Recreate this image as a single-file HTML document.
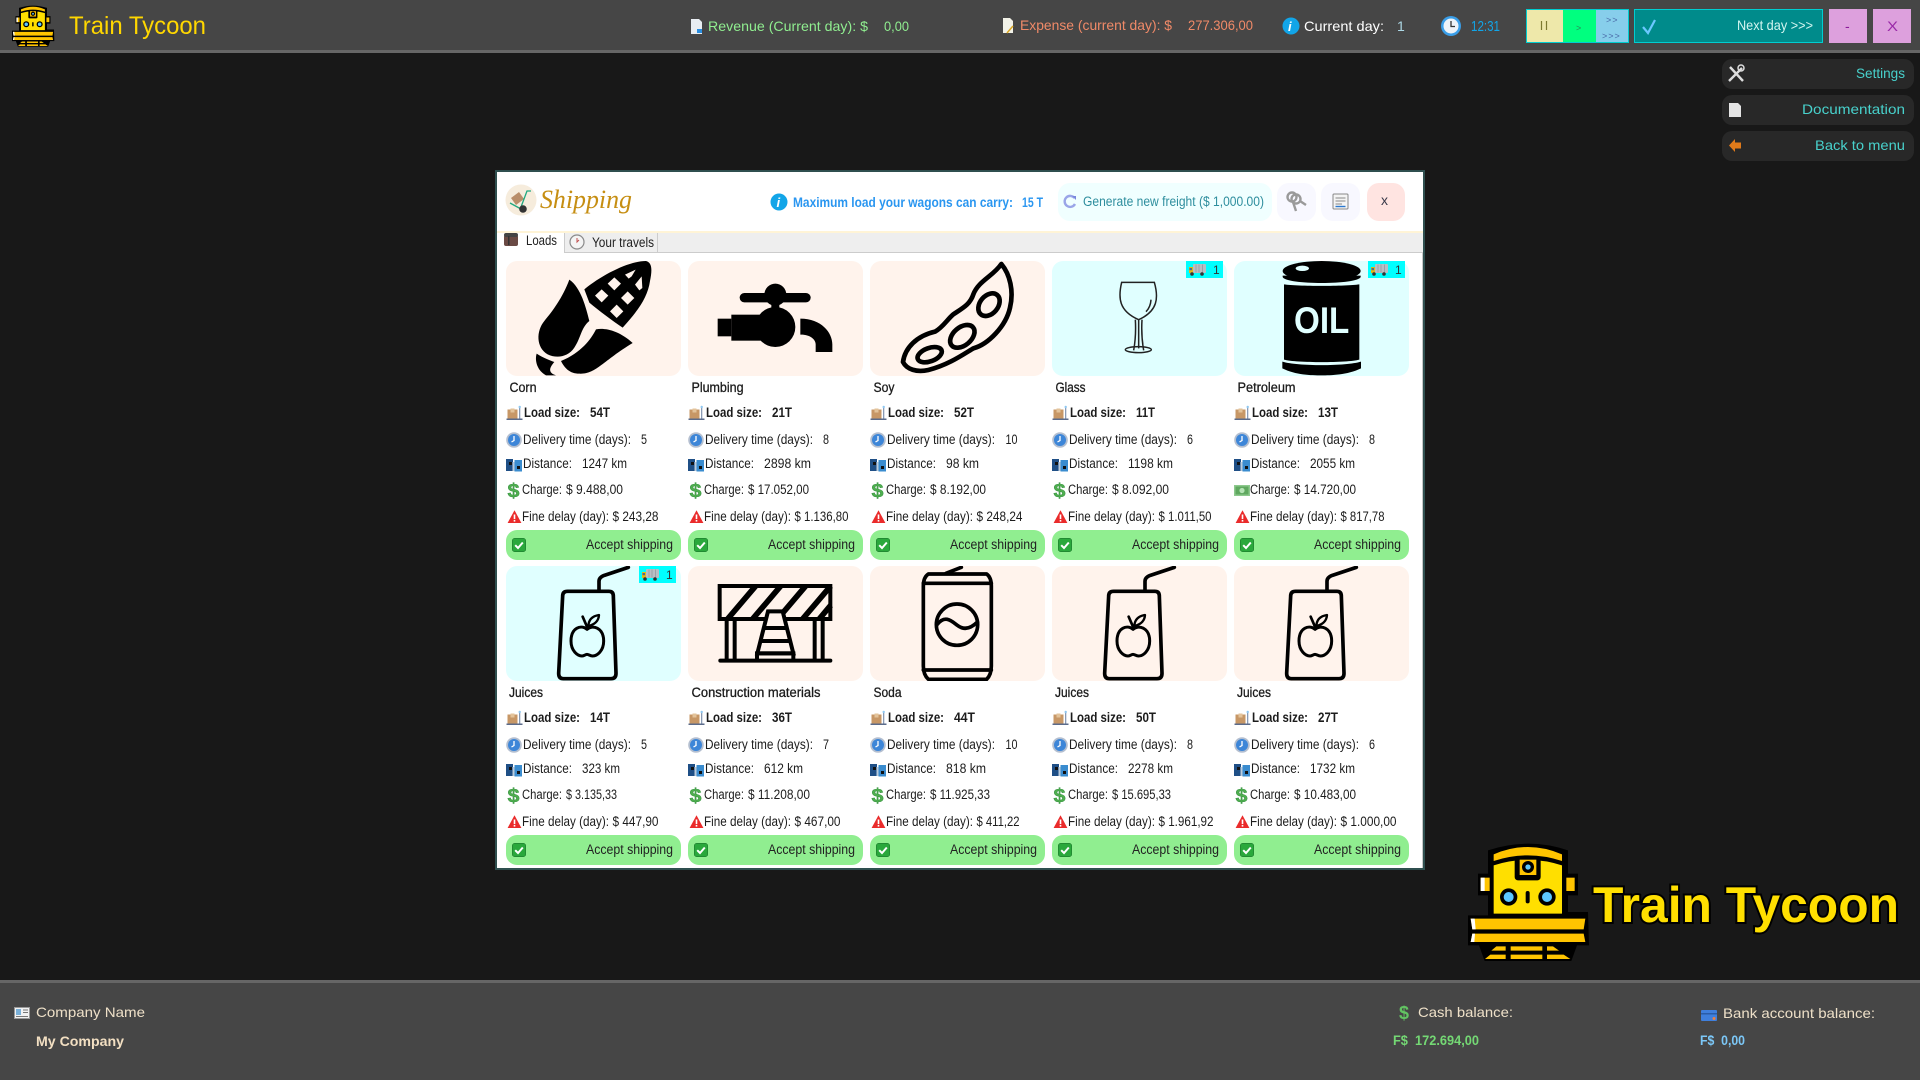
<!DOCTYPE html>
<html lang="en"><head><meta charset="utf-8"><title>Train Tycoon</title>
<style>
html,body{margin:0;padding:0;background:#181818;width:1920px;height:1080px;overflow:hidden}
svg{display:block;position:absolute;left:0;top:0}
text{font-family:"Liberation Sans",sans-serif;font-size:13.5px;fill:#1c1c1c;white-space:pre}
.b{font-weight:700}
.n{stroke:#1c1c1c;stroke-width:.3px}
.h{font-size:14px}
.mt{font-size:14px;fill:#48d1cc}
.cr{font-size:14px;fill:#eee0c8}
.ser{font-family:"Liberation Serif",serif;font-style:italic;font-size:28px;fill:#c68e12}
.act{font-size:13.5px;fill:#222}
.d{font-family:"Liberation Sans",sans-serif;font-weight:700;font-size:19px;fill:#4fae4f;stroke:#2e8b3a;stroke-width:.4}
</style></head><body>
<svg width="1920" height="1080" viewBox="0 0 1920 1080" xmlns="http://www.w3.org/2000/svg">
<defs>
<symbol id="logo" viewBox="80 35 370 360">
<path d="M145 95V60Q265 20 385 60V130H415V195H385V245H445L448 345H412L395 392H135L118 345H85L85 255H145V195H115V130H145Z" fill="#000"/>
<path d="M162 92V72Q265 28 367 72V92Q265 58 162 92Z" fill="#ffc400"/>
<path d="M162 105Q265 72 367 105V250H162Z" fill="#ffdf00"/>
<rect x="225" y="82" width="78" height="68" rx="10" fill="#000"/>
<rect x="240" y="88" width="50" height="46" fill="#ffc400"/>
<circle cx="265" cy="110" r="18" fill="#000"/><circle cx="265" cy="110" r="8" fill="#5cc8ff"/>
<rect x="123" y="142" width="27" height="40" fill="#ffc400"/><rect x="123" y="142" width="12" height="40" fill="#fff"/>
<rect x="380" y="142" width="25" height="40" fill="#ffc400"/>
<circle cx="207" cy="200" r="26" fill="#000"/><circle cx="207" cy="200" r="15" fill="#5cc8ff"/>
<circle cx="322" cy="200" r="26" fill="#000"/><circle cx="322" cy="200" r="15" fill="#5cc8ff"/>
<rect x="258" y="182" width="12" height="37" rx="6" fill="#000"/>
<path d="M93 265H437L432 297H98Z" fill="#ffc400"/><path d="M98 310H432L437 335H93Z" fill="#ffc400"/>
<path d="M93 265H105L108 297H98Z" fill="#fff"/><path d="M98 310H106L104 335H93Z" fill="#fff"/>
<path d="M170 348H198V361H155ZM213 348H308V361H213ZM322 348H340L358 361H322Z" fill="#ffc400"/>
<path d="M152 373H198V386H136ZM213 373H308V386H213ZM322 373H372L392 386H322Z" fill="#ffc400"/>
</symbol>
<symbol id="corn" viewBox="0 0 525 345">
<path d="M190 56C170 110 140 150 115 180C90 210 90 260 125 280C150 292 185 290 205 260C225 230 225 200 250 180C240 140 225 80 190 56Z"/>
<path d="M380 246C340 210 300 200 270 205C255 235 225 275 165 300C175 320 190 338 220 338C270 340 290 300 380 246Z"/>
<path d="M92 278C110 290 135 300 145 303C130 320 125 335 150 343L120 343C95 330 85 300 92 278Z"/>
<path d="M235 85C290 40 370 0 420 0C440 5 438 30 432 60C425 110 395 150 350 200C320 180 280 150 250 125Z"/>
<g fill="#fff3ec"><path d="M325 49L345 68L325 88L305 68ZM287 85L307 104L287 124L267 104ZM365 91L385 111L365 131L345 111ZM332 131L352 151L332 171L312 151ZM357 41L389 26L377 46L368 53ZM387 71L407 46L409 81L400 88Z"/></g>
</symbol>
<symbol id="tap" viewBox="0 0 525 345">
<rect x="155" y="96" width="213" height="28" rx="14"/><circle cx="262" cy="101" r="33"/><rect x="250" y="125" width="24" height="20"/><circle cx="262" cy="198" r="60"/>
<rect x="89" y="173" width="41" height="53"/><rect x="130" y="161" width="90" height="78"/>
<path d="M337 173C400 173 433 215 433 250V273H383V250C383 235 365 220 337 221Z"/>
</symbol>
<symbol id="soy" viewBox="0 0 525 345">
<g fill="none" stroke="#000" stroke-width="14" stroke-linejoin="round">
<path d="M99 303C105 260 140 225 195 212C218 200 232 175 250 160C280 140 300 130 310 100C325 60 370 45 394 9C420 40 432 90 420 140C408 195 355 250 310 262C280 280 235 312 175 327C140 335 110 325 99 303Z"/>
<ellipse cx="179" cy="281" rx="38" ry="20" transform="rotate(-20 179 281)"/>
<ellipse cx="277" cy="226" rx="42" ry="27" transform="rotate(-40 277 226)"/>
<ellipse cx="357" cy="131" rx="38" ry="27" transform="rotate(-50 357 131)"/>
</g></symbol>
<symbol id="glass" viewBox="0 0 525 345">
<g fill="none" stroke="#222" stroke-width="4.5">
<path d="M209 64H307C320 110 318 150 260 176C200 150 198 110 209 64Z"/>
<path d="M250 176C252 210 250 240 245 268M270 176C268 210 270 240 275 268M260 176V262M297 116C296 132 290 144 282 152"/>
<ellipse cx="259" cy="266" rx="39" ry="9"/>
</g></symbol>
<symbol id="oil" viewBox="0 0 525 345">
<ellipse cx="263" cy="30" rx="117" ry="30"/>
<ellipse cx="205" cy="22" rx="20" ry="8" fill="#e0ffff"/>
<path d="M146 44H380V48C376 60 320 66 263 66C206 66 150 60 146 48Z"/>
<path d="M150 70C190 76 336 76 376 70V296C340 306 186 306 150 296Z"/>
<path d="M145 302C190 316 336 316 381 302V322C340 342 290 343 263 343C230 343 186 342 145 322Z"/>
<text x="180" y="216" textLength="166" lengthAdjust="spacingAndGlyphs" style="font-size:110px;font-weight:700;fill:#e0ffff">OIL</text>
</symbol>
<symbol id="juice" viewBox="0 0 525 345">
<g fill="none" stroke="#000" stroke-width="11" stroke-linejoin="round" stroke-linecap="round">
<path d="M185 76H308Q322 76 322 90L330 322Q330 338 315 338H172Q158 338 158 322L170 90Q170 76 185 76Z"/>
<path d="M279 72V46Q279 34 295 28L367 4"/>
<path d="M243 190C225 175 195 185 195 225C195 255 215 270 228 270C235 270 238 265 243 265C248 265 252 270 260 270C273 270 293 255 293 225C293 185 260 175 243 190Z" stroke-width="9"/>
<path d="M230 152L243 182" stroke-width="8"/>
<path d="M247 180C248 160 260 150 279 147C278 165 265 176 247 180Z" stroke-width="7"/>
</g></symbol>
<symbol id="barrier" viewBox="0 0 525 345">
<g fill="none" stroke="#000" stroke-width="12" stroke-linecap="butt">
<path d="M118 160L203 60M193 160L278 60M268 160L353 60M343 160L428 60" stroke-width="17"/>
<path d="M393 160L428 118" stroke-width="17"/>
<rect x="95" y="60" width="332" height="99"/>
<path d="M116 165V284M140 165V284M380 165V284M404 165V284"/>
<path d="M97 284H427" stroke-linecap="round"/>
<path d="M240 136H284L316 262H208Z" fill="#fff3ec"/>
<path d="M207 284V262H316V284M228 186H296M218 225H306"/>
</g>
</symbol>
<symbol id="can" viewBox="0 0 525 345">
<g fill="none" stroke="#000" stroke-width="11" stroke-linejoin="round" stroke-linecap="round">
<path d="M175 24H350Q364 34 364 60V300Q364 326 350 340H175Q160 326 160 300V60Q160 34 175 24Z"/>
<path d="M160 52H364M160 312H364"/>
<path d="M228 22L274 4"/>
<circle cx="261" cy="176" r="62"/>
<path d="M201 176C225 145 245 165 262 178C280 192 300 190 322 168"/>
</g></symbol>
<symbol id="ic-load" viewBox="0 0 16 15">
<rect x="1" y="4" width="10" height="9" fill="#c79766"/><rect x="4" y="3" width="4" height="4" fill="#e3c39a"/><rect x="12.5" y="1" width="1.3" height="12" fill="#8a9bb5"/><rect x="0" y="13" width="16" height="1.5" fill="#5b6b8a"/><circle cx="13.2" cy="1.5" r="1.2" fill="#8fc7f0"/>
</symbol>
<symbol id="ic-clock" viewBox="0 0 16 16">
<circle cx="8" cy="8" r="7.8" fill="#b4bfd0"/><circle cx="8" cy="8" r="6" fill="#3d86d8"/><path d="M8 4V8.5L5.5 10" fill="none" stroke="#fff" stroke-width="1.3"/>
</symbol>
<symbol id="ic-map" viewBox="0 0 16 13">
<rect x="0" y="0" width="7" height="12" fill="#1f4f86"/><rect x="8.5" y="1" width="7.5" height="11.5" fill="#3a8ccf"/><rect x="3" y="3" width="3" height="3" fill="#111"/><rect x="11" y="7" width="3" height="3" fill="#111"/><rect x="6.5" y="3" width="2" height="9" fill="#bcd"/>
</symbol>
<symbol id="ic-warn" viewBox="0 0 14 13">
<path d="M7 .3L13.9 13H.1Z" fill="#ea2b2b"/><rect x="6.2" y="4.5" width="1.6" height="4.6" fill="#fff"/><rect x="6.2" y="10" width="1.6" height="1.6" fill="#fff"/>
</symbol>
<symbol id="ic-check" viewBox="0 0 14 14">
<rect x=".3" y=".3" width="13.4" height="13.4" rx="2.5" fill="#2aa83c" stroke="#1c7a2c" stroke-width=".6"/><path d="M3.2 7.2L6 10L10.8 4.5" fill="none" stroke="#fff" stroke-width="2"/>
</symbol>
<symbol id="ic-truck" viewBox="0 0 17 13">
<rect x="4" y="1" width="13" height="9" rx="1" fill="#b9bec4"/><path d="M7 1.5V9.5M10 1.5V9.5M13.5 1.5V9.5" stroke="#8e949b" stroke-width=".7"/><path d="M0 4H4V10H0Z" fill="#e5b815"/><rect x=".5" y="5" width="2.5" height="2.2" fill="#4e6c8c"/><circle cx="3" cy="11" r="1.8" fill="#333"/><circle cx="13" cy="11" r="1.8" fill="#333"/>
</symbol>
<symbol id="ic-cash" viewBox="0 0 16 11">
<rect width="16" height="11" fill="#8dc98d"/><rect x="1.5" y="1.5" width="13" height="8" fill="#5fa85f"/><circle cx="8" cy="5.5" r="2.6" fill="#b5e3b5"/>
</symbol>
</defs>

<!-- top bar -->
<rect width="1920" height="50" fill="#464646"/><rect y="50" width="1920" height="3" fill="#666"/>
<use href="#logo" x="10" y="5" width="46" height="42"/>
<text x="69" y="34" textLength="137" lengthAdjust="spacingAndGlyphs" style="font-size:25px;fill:#ffd700">Train Tycoon</text>

<path d="M691 19H699L702 22V34H691Z" fill="#e8edf2"/><rect x="697" y="29" width="5" height="4" fill="#2a8ee0"/>
<text class="h" x="708" y="31" textLength="160" lengthAdjust="spacingAndGlyphs" style="fill:#90ee90">Revenue (Current day): $</text>
<text class="h" x="884" y="31" textLength="25" lengthAdjust="spacingAndGlyphs" style="fill:#90ee90">0,00</text>

<path d="M1003 18H1010L1013 21V33H1003Z" fill="#f2f2e8"/><path d="M1007 33L1013 26" stroke="#d9a520" stroke-width="1.5"/>
<text class="h" x="1020" y="30" textLength="152" lengthAdjust="spacingAndGlyphs" style="fill:#f08a68">Expense (current day): $</text>
<text class="h" x="1188" y="30" textLength="65" lengthAdjust="spacingAndGlyphs" style="fill:#f08a68">277.306,00</text>

<circle cx="1291" cy="26" r="8.5" fill="#12a5e8"/><text x="1288" y="31" style="font-size:13px;font-weight:700;font-style:italic;fill:#fff">i</text>
<text class="h" x="1304" y="31" textLength="80" lengthAdjust="spacingAndGlyphs" style="fill:#fff">Current day:</text>
<text class="h" x="1397" y="31" style="fill:#add8e6">1</text>
<circle cx="1451" cy="26" r="10" fill="#3a9ee8"/><circle cx="1451" cy="26" r="7.5" fill="#eef3f8"/><path d="M1451 21V26.5H1455" fill="none" stroke="#333" stroke-width="1.3"/>
<text class="h" x="1471" y="31" textLength="29" lengthAdjust="spacingAndGlyphs" style="font-size:15px;fill:#12a5e8">12:31</text>

<rect x="1526" y="9" width="103" height="34" fill="#00ced1"/>
<rect x="1527" y="10" width="36" height="32" fill="#eee8aa"/><rect x="1563" y="10" width="33" height="32" fill="#00ff7f"/><rect x="1596" y="10" width="32" height="32" fill="#87ceeb"/>
<path d="M1541.5 21V30M1546.5 21V30" stroke="#7d7a30" stroke-width="1.2"/>
<text x="1576" y="31" style="font-size:9px;fill:#2a8a5a">&gt;</text>
<text x="1606" y="23" style="font-size:9px;letter-spacing:1px;fill:#4a6aa8">&gt;&gt;</text>
<text x="1602" y="39" style="font-size:9px;letter-spacing:1px;fill:#4a6aa8">&gt;&gt;&gt;</text>
<rect x="1634.5" y="9.5" width="188" height="33" fill="#008b8b" stroke="#00ced1"/>
<path d="M1643 27L1648 33L1655 20" fill="none" stroke="#6bc8ff" stroke-width="2.2"/>
<text class="h" x="1737" y="30" textLength="76" lengthAdjust="spacingAndGlyphs" style="fill:#d2f5f0">Next day &gt;&gt;&gt;</text>
<rect x="1829" y="9" width="38" height="34" fill="#dda0dd"/><rect x="1873" y="9" width="38" height="34" fill="#dda0dd"/>
<text x="1845" y="31" style="font-size:14px;fill:#8a1a9a">-</text>
<text x="1887" y="31" textLength="11" lengthAdjust="spacingAndGlyphs" style="font-size:14px;fill:#9a2aa8">X</text>

<!-- side menu -->
<rect x="1722" y="59" width="192" height="30" rx="10" fill="#282828"/><rect x="1722" y="95" width="192" height="30" rx="10" fill="#282828"/><rect x="1722" y="131" width="192" height="30" rx="10" fill="#282828"/>
<path d="M1730 67L1743 81M1742 68L1729 81" stroke="#ddd" stroke-width="2.4"/><circle cx="1741" cy="68" r="3" fill="none" stroke="#ddd" stroke-width="1.5"/>
<path d="M1729 103H1738L1741 106V117H1729Z" fill="#e4e4e4"/>
<path d="M1735 139V142.5H1741V148.5H1735V152L1729 145.5Z" fill="#e07a1a"/>
<text class="mt" x="1856" y="78" textLength="49" lengthAdjust="spacingAndGlyphs">Settings</text>
<text class="mt" x="1802" y="114" textLength="103" lengthAdjust="spacingAndGlyphs">Documentation</text>
<text class="mt" x="1815" y="150" textLength="90" lengthAdjust="spacingAndGlyphs">Back to menu</text>

<!-- modal -->
<rect x="495" y="170" width="930" height="700" fill="#2f4f4f"/>
<rect x="497" y="172" width="926" height="696" fill="#fff"/>
<rect x="1422" y="252" width="1" height="616" fill="#c8c8c8"/>
<circle cx="521" cy="200" r="15.5" fill="#f6ecdc"/>
<path d="M511 198L519 192L524 199L516 205Z" fill="#b98e6a"/><path d="M531 191H527L521 207" fill="none" stroke="#1fa97f" stroke-width="1.3"/><path d="M510 203L521 209" stroke="#1fa97f" stroke-width="1.3"/><circle cx="523" cy="209" r="3.8" fill="#333"/>
<text class="ser" x="540" y="208" textLength="92" lengthAdjust="spacingAndGlyphs" style="font-size:26px">Shipping</text>
<circle cx="779" cy="202" r="8.5" fill="#12a5e8"/><text x="776.5" y="207" style="font-size:13px;font-weight:700;font-style:italic;fill:#fff">i</text>
<text class="b" x="793" y="207" textLength="220" lengthAdjust="spacingAndGlyphs" style="fill:#2a96f0;font-size:13.5px">Maximum load your wagons can carry:</text>
<text class="b" x="1022" y="207" textLength="21" lengthAdjust="spacingAndGlyphs" style="fill:#2a96f0;font-size:13.5px">15 T</text>
<rect x="1058" y="183" width="214" height="38" rx="12" fill="#f0ffff"/>
<path d="M1074.5 198A5.5 5.5 0 1 0 1075 204" fill="none" stroke="#9aa5e8" stroke-width="2.4"/><path d="M1072 196H1076V200Z" fill="#7a88dd"/>
<text x="1083" y="206" textLength="181" lengthAdjust="spacingAndGlyphs" style="fill:#2e8e9e;font-size:13.5px">Generate new freight ($ 1,000.00)</text>
<rect x="1277" y="183" width="39" height="38" rx="12" fill="#f8f8ff"/><rect x="1321" y="183" width="39" height="38" rx="12" fill="#f8f8ff"/><rect x="1367" y="183" width="38" height="38" rx="12" fill="#ffe4e1"/>
<g fill="none" stroke="#9a9a9a" stroke-width="2.4"><circle cx="1292" cy="197" r="4.5"/><circle cx="1296" cy="199" r="4.5"/><path d="M1293 202L1296 211M1300 201L1306 205"/></g>
<rect x="1333" y="194" width="15" height="15" rx="1" fill="#f4f4f4" stroke="#888"/><path d="M1335.5 198H1345.5M1335.5 201H1345.5M1335.5 204H1342" stroke="#888"/><path d="M1335.5 206.5H1345.5" stroke="#2a78d0" stroke-width="1.4"/>
<text x="1381" y="205" style="font-size:14px;fill:#3a3a4a">x</text>

<rect x="497" y="231" width="926" height="2" fill="#fff4d6"/>
<rect x="497" y="233" width="926" height="19" fill="#eee"/><rect x="497" y="252" width="926" height="1" fill="#ccc"/>
<rect x="497" y="233" width="67" height="20" fill="#fff"/>
<rect x="564" y="233" width="1" height="20" fill="#ccc"/><rect x="657" y="233" width="1" height="20" fill="#ccc"/>
<rect x="504" y="235" width="14" height="11" rx="2" fill="#6a4a44"/><rect x="504" y="233" width="14" height="4" rx="2" fill="#444"/><rect x="508" y="236" width="1.5" height="9" fill="#333"/>
<text x="526" y="245" textLength="31" lengthAdjust="spacingAndGlyphs" style="fill:#222">Loads</text>
<circle cx="577" cy="242" r="7" fill="#f4f4f4" stroke="#8a8a8a" stroke-width="1.2"/><path d="M577 238V242L579 240" stroke="#c05050" fill="none"/>
<text x="592" y="247" textLength="62" lengthAdjust="spacingAndGlyphs" style="fill:#222">Your travels</text>

<!-- row 1 -->
<g transform="translate(506,261)">
<rect width="175" height="115" rx="11" fill="#fff3ec"/><use href="#corn" width="175" height="115"/>
<text class="n" x="3.5" y="131" textLength="27" lengthAdjust="spacingAndGlyphs">Corn</text>
<use href="#ic-load" x="0.5" y="144.5" width="16" height="15"/><text class="b" x="18" y="156" textLength="56" lengthAdjust="spacingAndGlyphs">Load size:</text><text class="b" x="84" y="156" textLength="20" lengthAdjust="spacingAndGlyphs">54T</text>
<use href="#ic-clock" y="171" width="16" height="16"/><text x="17" y="183" textLength="108" lengthAdjust="spacingAndGlyphs">Delivery time (days):</text><text x="135" y="183" textLength="6" lengthAdjust="spacingAndGlyphs">5</text>
<use href="#ic-map" y="198" width="16" height="13"/><text x="17" y="207" textLength="49" lengthAdjust="spacingAndGlyphs">Distance:</text><text x="76" y="207" textLength="45" lengthAdjust="spacingAndGlyphs">1247 km</text>
<text class="d" x="1.5" y="236" textLength="12" lengthAdjust="spacingAndGlyphs">$</text><text x="16" y="233" textLength="40" lengthAdjust="spacingAndGlyphs">Charge:</text><text x="60" y="233" textLength="57" lengthAdjust="spacingAndGlyphs">$ 9.488,00</text>
<use href="#ic-warn" x="1.5" y="249" width="14" height="13"/><text x="16" y="260" textLength="87" lengthAdjust="spacingAndGlyphs">Fine delay (day):</text><text x="106.5" y="260" textLength="46" lengthAdjust="spacingAndGlyphs">$ 243,28</text>
<rect y="269" width="175" height="30" rx="11" fill="#90ee90"/><use href="#ic-check" x="6" y="277" width="14" height="14"/><text class="act" x="80" y="288" textLength="87" lengthAdjust="spacingAndGlyphs">Accept shipping</text>
</g>
<g transform="translate(688,261)">
<rect width="175" height="115" rx="11" fill="#fff3ec"/><use href="#tap" width="175" height="115"/>
<text class="n" x="3.5" y="131" textLength="52" lengthAdjust="spacingAndGlyphs">Plumbing</text>
<use href="#ic-load" x="0.5" y="144.5" width="16" height="15"/><text class="b" x="18" y="156" textLength="56" lengthAdjust="spacingAndGlyphs">Load size:</text><text class="b" x="84" y="156" textLength="20" lengthAdjust="spacingAndGlyphs">21T</text>
<use href="#ic-clock" y="171" width="16" height="16"/><text x="17" y="183" textLength="108" lengthAdjust="spacingAndGlyphs">Delivery time (days):</text><text x="135" y="183" textLength="6" lengthAdjust="spacingAndGlyphs">8</text>
<use href="#ic-map" y="198" width="16" height="13"/><text x="17" y="207" textLength="49" lengthAdjust="spacingAndGlyphs">Distance:</text><text x="76" y="207" textLength="47" lengthAdjust="spacingAndGlyphs">2898 km</text>
<text class="d" x="1.5" y="236" textLength="12" lengthAdjust="spacingAndGlyphs">$</text><text x="16" y="233" textLength="40" lengthAdjust="spacingAndGlyphs">Charge:</text><text x="60" y="233" textLength="61" lengthAdjust="spacingAndGlyphs">$ 17.052,00</text>
<use href="#ic-warn" x="1.5" y="249" width="14" height="13"/><text x="16" y="260" textLength="87" lengthAdjust="spacingAndGlyphs">Fine delay (day):</text><text x="106.5" y="260" textLength="54" lengthAdjust="spacingAndGlyphs">$ 1.136,80</text>
<rect y="269" width="175" height="30" rx="11" fill="#90ee90"/><use href="#ic-check" x="6" y="277" width="14" height="14"/><text class="act" x="80" y="288" textLength="87" lengthAdjust="spacingAndGlyphs">Accept shipping</text>
</g>
<g transform="translate(870,261)">
<rect width="175" height="115" rx="11" fill="#fff3ec"/><use href="#soy" width="175" height="115"/>
<text class="n" x="3.5" y="131" textLength="21" lengthAdjust="spacingAndGlyphs">Soy</text>
<use href="#ic-load" x="0.5" y="144.5" width="16" height="15"/><text class="b" x="18" y="156" textLength="56" lengthAdjust="spacingAndGlyphs">Load size:</text><text class="b" x="84" y="156" textLength="20" lengthAdjust="spacingAndGlyphs">52T</text>
<use href="#ic-clock" y="171" width="16" height="16"/><text x="17" y="183" textLength="108" lengthAdjust="spacingAndGlyphs">Delivery time (days):</text><text x="135.5" y="183" textLength="12" lengthAdjust="spacingAndGlyphs">10</text>
<use href="#ic-map" y="198" width="16" height="13"/><text x="17" y="207" textLength="49" lengthAdjust="spacingAndGlyphs">Distance:</text><text x="76" y="207" textLength="33" lengthAdjust="spacingAndGlyphs">98 km</text>
<text class="d" x="1.5" y="236" textLength="12" lengthAdjust="spacingAndGlyphs">$</text><text x="16" y="233" textLength="40" lengthAdjust="spacingAndGlyphs">Charge:</text><text x="60" y="233" textLength="56" lengthAdjust="spacingAndGlyphs">$ 8.192,00</text>
<use href="#ic-warn" x="1.5" y="249" width="14" height="13"/><text x="16" y="260" textLength="87" lengthAdjust="spacingAndGlyphs">Fine delay (day):</text><text x="106.5" y="260" textLength="46" lengthAdjust="spacingAndGlyphs">$ 248,24</text>
<rect y="269" width="175" height="30" rx="11" fill="#90ee90"/><use href="#ic-check" x="6" y="277" width="14" height="14"/><text class="act" x="80" y="288" textLength="87" lengthAdjust="spacingAndGlyphs">Accept shipping</text>
</g>
<g transform="translate(1052,261)">
<rect width="175" height="115" rx="11" fill="#e0ffff"/><use href="#glass" width="175" height="115"/>
<rect x="134" width="37" height="17" fill="#00ffff"/><use href="#ic-truck" x="137" y="2" width="17" height="13"/><text x="161" y="13" style="font-size:12px;fill:#333">1</text>
<text class="n" x="3.5" y="131" textLength="30" lengthAdjust="spacingAndGlyphs">Glass</text>
<use href="#ic-load" x="0.5" y="144.5" width="16" height="15"/><text class="b" x="18" y="156" textLength="56" lengthAdjust="spacingAndGlyphs">Load size:</text><text class="b" x="84" y="156" textLength="19" lengthAdjust="spacingAndGlyphs">11T</text>
<use href="#ic-clock" y="171" width="16" height="16"/><text x="17" y="183" textLength="108" lengthAdjust="spacingAndGlyphs">Delivery time (days):</text><text x="135" y="183" textLength="6" lengthAdjust="spacingAndGlyphs">6</text>
<use href="#ic-map" y="198" width="16" height="13"/><text x="17" y="207" textLength="49" lengthAdjust="spacingAndGlyphs">Distance:</text><text x="76" y="207" textLength="45" lengthAdjust="spacingAndGlyphs">1198 km</text>
<text class="d" x="1.5" y="236" textLength="12" lengthAdjust="spacingAndGlyphs">$</text><text x="16" y="233" textLength="40" lengthAdjust="spacingAndGlyphs">Charge:</text><text x="60" y="233" textLength="57" lengthAdjust="spacingAndGlyphs">$ 8.092,00</text>
<use href="#ic-warn" x="1.5" y="249" width="14" height="13"/><text x="16" y="260" textLength="87" lengthAdjust="spacingAndGlyphs">Fine delay (day):</text><text x="106.5" y="260" textLength="53" lengthAdjust="spacingAndGlyphs">$ 1.011,50</text>
<rect y="269" width="175" height="30" rx="11" fill="#90ee90"/><use href="#ic-check" x="6" y="277" width="14" height="14"/><text class="act" x="80" y="288" textLength="87" lengthAdjust="spacingAndGlyphs">Accept shipping</text>
</g>
<g transform="translate(1234,261)">
<rect width="175" height="115" rx="11" fill="#e0ffff"/><use href="#oil" width="175" height="115"/>
<rect x="134" width="37" height="17" fill="#00ffff"/><use href="#ic-truck" x="137" y="2" width="17" height="13"/><text x="161" y="13" style="font-size:12px;fill:#333">1</text>
<text class="n" x="3.5" y="131" textLength="58" lengthAdjust="spacingAndGlyphs">Petroleum</text>
<use href="#ic-load" x="0.5" y="144.5" width="16" height="15"/><text class="b" x="18" y="156" textLength="56" lengthAdjust="spacingAndGlyphs">Load size:</text><text class="b" x="84" y="156" textLength="20" lengthAdjust="spacingAndGlyphs">13T</text>
<use href="#ic-clock" y="171" width="16" height="16"/><text x="17" y="183" textLength="108" lengthAdjust="spacingAndGlyphs">Delivery time (days):</text><text x="135" y="183" textLength="6" lengthAdjust="spacingAndGlyphs">8</text>
<use href="#ic-map" y="198" width="16" height="13"/><text x="17" y="207" textLength="49" lengthAdjust="spacingAndGlyphs">Distance:</text><text x="76" y="207" textLength="45" lengthAdjust="spacingAndGlyphs">2055 km</text>
<use href="#ic-cash" y="224" width="16" height="11"/><text x="16" y="233" textLength="40" lengthAdjust="spacingAndGlyphs">Charge:</text><text x="60" y="233" textLength="62" lengthAdjust="spacingAndGlyphs">$ 14.720,00</text>
<use href="#ic-warn" x="1.5" y="249" width="14" height="13"/><text x="16" y="260" textLength="87" lengthAdjust="spacingAndGlyphs">Fine delay (day):</text><text x="106.5" y="260" textLength="44" lengthAdjust="spacingAndGlyphs">$ 817,78</text>
<rect y="269" width="175" height="30" rx="11" fill="#90ee90"/><use href="#ic-check" x="6" y="277" width="14" height="14"/><text class="act" x="80" y="288" textLength="87" lengthAdjust="spacingAndGlyphs">Accept shipping</text>
</g>

<!-- row 2 -->
<g transform="translate(506,566)">
<rect width="175" height="115" rx="11" fill="#e0ffff"/><use href="#juice" width="175" height="115"/>
<rect x="133" width="37" height="17" fill="#00ffff"/><use href="#ic-truck" x="136" y="2" width="17" height="13"/><text x="160" y="13" style="font-size:12px;fill:#333">1</text>
<text class="n" x="3" y="131" textLength="34" lengthAdjust="spacingAndGlyphs">Juices</text>
<use href="#ic-load" x="0.5" y="144.5" width="16" height="15"/><text class="b" x="18" y="156" textLength="56" lengthAdjust="spacingAndGlyphs">Load size:</text><text class="b" x="84" y="156" textLength="20" lengthAdjust="spacingAndGlyphs">14T</text>
<use href="#ic-clock" y="171" width="16" height="16"/><text x="17" y="183" textLength="108" lengthAdjust="spacingAndGlyphs">Delivery time (days):</text><text x="135" y="183" textLength="6" lengthAdjust="spacingAndGlyphs">5</text>
<use href="#ic-map" y="198" width="16" height="13"/><text x="17" y="207" textLength="49" lengthAdjust="spacingAndGlyphs">Distance:</text><text x="76" y="207" textLength="38" lengthAdjust="spacingAndGlyphs">323 km</text>
<text class="d" x="1.5" y="236" textLength="12" lengthAdjust="spacingAndGlyphs">$</text><text x="16" y="233" textLength="40" lengthAdjust="spacingAndGlyphs">Charge:</text><text x="60" y="233" textLength="51" lengthAdjust="spacingAndGlyphs">$ 3.135,33</text>
<use href="#ic-warn" x="1.5" y="249" width="14" height="13"/><text x="16" y="260" textLength="87" lengthAdjust="spacingAndGlyphs">Fine delay (day):</text><text x="106.5" y="260" textLength="46" lengthAdjust="spacingAndGlyphs">$ 447,90</text>
<rect y="269" width="175" height="30" rx="11" fill="#90ee90"/><use href="#ic-check" x="6" y="277" width="14" height="14"/><text class="act" x="80" y="288" textLength="87" lengthAdjust="spacingAndGlyphs">Accept shipping</text>
</g>
<g transform="translate(688,566)">
<rect width="175" height="115" rx="11" fill="#fff3ec"/><use href="#barrier" width="175" height="115"/>
<text class="n" x="3.5" y="131" textLength="129" lengthAdjust="spacingAndGlyphs">Construction materials</text>
<use href="#ic-load" x="0.5" y="144.5" width="16" height="15"/><text class="b" x="18" y="156" textLength="56" lengthAdjust="spacingAndGlyphs">Load size:</text><text class="b" x="84" y="156" textLength="20" lengthAdjust="spacingAndGlyphs">36T</text>
<use href="#ic-clock" y="171" width="16" height="16"/><text x="17" y="183" textLength="108" lengthAdjust="spacingAndGlyphs">Delivery time (days):</text><text x="135" y="183" textLength="6" lengthAdjust="spacingAndGlyphs">7</text>
<use href="#ic-map" y="198" width="16" height="13"/><text x="17" y="207" textLength="49" lengthAdjust="spacingAndGlyphs">Distance:</text><text x="76" y="207" textLength="39" lengthAdjust="spacingAndGlyphs">612 km</text>
<text class="d" x="1.5" y="236" textLength="12" lengthAdjust="spacingAndGlyphs">$</text><text x="16" y="233" textLength="40" lengthAdjust="spacingAndGlyphs">Charge:</text><text x="60" y="233" textLength="62" lengthAdjust="spacingAndGlyphs">$ 11.208,00</text>
<use href="#ic-warn" x="1.5" y="249" width="14" height="13"/><text x="16" y="260" textLength="87" lengthAdjust="spacingAndGlyphs">Fine delay (day):</text><text x="106.5" y="260" textLength="46" lengthAdjust="spacingAndGlyphs">$ 467,00</text>
<rect y="269" width="175" height="30" rx="11" fill="#90ee90"/><use href="#ic-check" x="6" y="277" width="14" height="14"/><text class="act" x="80" y="288" textLength="87" lengthAdjust="spacingAndGlyphs">Accept shipping</text>
</g>
<g transform="translate(870,566)">
<rect width="175" height="115" rx="11" fill="#fff3ec"/><use href="#can" width="175" height="115"/>
<text class="n" x="3.5" y="131" textLength="28" lengthAdjust="spacingAndGlyphs">Soda</text>
<use href="#ic-load" x="0.5" y="144.5" width="16" height="15"/><text class="b" x="18" y="156" textLength="56" lengthAdjust="spacingAndGlyphs">Load size:</text><text class="b" x="84" y="156" textLength="21" lengthAdjust="spacingAndGlyphs">44T</text>
<use href="#ic-clock" y="171" width="16" height="16"/><text x="17" y="183" textLength="108" lengthAdjust="spacingAndGlyphs">Delivery time (days):</text><text x="135.5" y="183" textLength="12" lengthAdjust="spacingAndGlyphs">10</text>
<use href="#ic-map" y="198" width="16" height="13"/><text x="17" y="207" textLength="49" lengthAdjust="spacingAndGlyphs">Distance:</text><text x="76" y="207" textLength="40" lengthAdjust="spacingAndGlyphs">818 km</text>
<text class="d" x="1.5" y="236" textLength="12" lengthAdjust="spacingAndGlyphs">$</text><text x="16" y="233" textLength="40" lengthAdjust="spacingAndGlyphs">Charge:</text><text x="60" y="233" textLength="60" lengthAdjust="spacingAndGlyphs">$ 11.925,33</text>
<use href="#ic-warn" x="1.5" y="249" width="14" height="13"/><text x="16" y="260" textLength="87" lengthAdjust="spacingAndGlyphs">Fine delay (day):</text><text x="106.5" y="260" textLength="43" lengthAdjust="spacingAndGlyphs">$ 411,22</text>
<rect y="269" width="175" height="30" rx="11" fill="#90ee90"/><use href="#ic-check" x="6" y="277" width="14" height="14"/><text class="act" x="80" y="288" textLength="87" lengthAdjust="spacingAndGlyphs">Accept shipping</text>
</g>
<g transform="translate(1052,566)">
<rect width="175" height="115" rx="11" fill="#fff3ec"/><use href="#juice" width="175" height="115"/>
<text class="n" x="3" y="131" textLength="34" lengthAdjust="spacingAndGlyphs">Juices</text>
<use href="#ic-load" x="0.5" y="144.5" width="16" height="15"/><text class="b" x="18" y="156" textLength="56" lengthAdjust="spacingAndGlyphs">Load size:</text><text class="b" x="84" y="156" textLength="20" lengthAdjust="spacingAndGlyphs">50T</text>
<use href="#ic-clock" y="171" width="16" height="16"/><text x="17" y="183" textLength="108" lengthAdjust="spacingAndGlyphs">Delivery time (days):</text><text x="135" y="183" textLength="6" lengthAdjust="spacingAndGlyphs">8</text>
<use href="#ic-map" y="198" width="16" height="13"/><text x="17" y="207" textLength="49" lengthAdjust="spacingAndGlyphs">Distance:</text><text x="76" y="207" textLength="45" lengthAdjust="spacingAndGlyphs">2278 km</text>
<text class="d" x="1.5" y="236" textLength="12" lengthAdjust="spacingAndGlyphs">$</text><text x="16" y="233" textLength="40" lengthAdjust="spacingAndGlyphs">Charge:</text><text x="60" y="233" textLength="59" lengthAdjust="spacingAndGlyphs">$ 15.695,33</text>
<use href="#ic-warn" x="1.5" y="249" width="14" height="13"/><text x="16" y="260" textLength="87" lengthAdjust="spacingAndGlyphs">Fine delay (day):</text><text x="106.5" y="260" textLength="55" lengthAdjust="spacingAndGlyphs">$ 1.961,92</text>
<rect y="269" width="175" height="30" rx="11" fill="#90ee90"/><use href="#ic-check" x="6" y="277" width="14" height="14"/><text class="act" x="80" y="288" textLength="87" lengthAdjust="spacingAndGlyphs">Accept shipping</text>
</g>
<g transform="translate(1234,566)">
<rect width="175" height="115" rx="11" fill="#fff3ec"/><use href="#juice" width="175" height="115"/>
<text class="n" x="3" y="131" textLength="34" lengthAdjust="spacingAndGlyphs">Juices</text>
<use href="#ic-load" x="0.5" y="144.5" width="16" height="15"/><text class="b" x="18" y="156" textLength="56" lengthAdjust="spacingAndGlyphs">Load size:</text><text class="b" x="84" y="156" textLength="20" lengthAdjust="spacingAndGlyphs">27T</text>
<use href="#ic-clock" y="171" width="16" height="16"/><text x="17" y="183" textLength="108" lengthAdjust="spacingAndGlyphs">Delivery time (days):</text><text x="135" y="183" textLength="6" lengthAdjust="spacingAndGlyphs">6</text>
<use href="#ic-map" y="198" width="16" height="13"/><text x="17" y="207" textLength="49" lengthAdjust="spacingAndGlyphs">Distance:</text><text x="76" y="207" textLength="45" lengthAdjust="spacingAndGlyphs">1732 km</text>
<text class="d" x="1.5" y="236" textLength="12" lengthAdjust="spacingAndGlyphs">$</text><text x="16" y="233" textLength="40" lengthAdjust="spacingAndGlyphs">Charge:</text><text x="60" y="233" textLength="62" lengthAdjust="spacingAndGlyphs">$ 10.483,00</text>
<use href="#ic-warn" x="1.5" y="249" width="14" height="13"/><text x="16" y="260" textLength="87" lengthAdjust="spacingAndGlyphs">Fine delay (day):</text><text x="106.5" y="260" textLength="56" lengthAdjust="spacingAndGlyphs">$ 1.000,00</text>
<rect y="269" width="175" height="30" rx="11" fill="#90ee90"/><use href="#ic-check" x="6" y="277" width="14" height="14"/><text class="act" x="80" y="288" textLength="87" lengthAdjust="spacingAndGlyphs">Accept shipping</text>
</g>

<!-- big logo -->
<use href="#logo" x="1466" y="842" width="124" height="120"/>
<text x="1593" y="922" textLength="306" lengthAdjust="spacingAndGlyphs" stroke="#000" stroke-width="4" paint-order="stroke" style="font-size:50px;font-weight:700;fill:#ffdf00">Train Tycoon</text>

<!-- footer -->
<rect y="980" width="1920" height="100" fill="#464646"/><rect y="980" width="1920" height="3" fill="#666"/>
<rect x="14.5" y="1007.5" width="15" height="11" fill="#f2f2f2" stroke="#999"/><rect x="16" y="1009" width="5" height="6" fill="#7ab0d8"/><path d="M23 1010H28M23 1012.5H28M16 1016.5H28" stroke="#777"/>
<text class="cr" x="36" y="1017" textLength="109" lengthAdjust="spacingAndGlyphs">Company Name</text>
<text class="cr b" x="36" y="1046" textLength="88" lengthAdjust="spacingAndGlyphs" style="fill:#f2dfc2">My Company</text>
<text x="1399" y="1019" textLength="10" lengthAdjust="spacingAndGlyphs" style="font-size:18px;font-weight:700;fill:#62c462">$</text>
<text class="cr" x="1418" y="1017" textLength="95" lengthAdjust="spacingAndGlyphs">Cash balance:</text>
<text class="b" x="1393" y="1045" textLength="86" lengthAdjust="spacingAndGlyphs" style="fill:#74d874">F$  172.694,00</text>
<rect x="1701" y="1010" width="16" height="11" rx="1" fill="#3f7fdc"/><rect x="1701" y="1013" width="16" height="1.5" fill="#2a5ca8"/><circle cx="1714" cy="1018.5" r="1.5" fill="#ee8040"/>
<text class="cr" x="1723" y="1018" textLength="152" lengthAdjust="spacingAndGlyphs">Bank account balance:</text>
<text class="b" x="1700" y="1045" textLength="45" lengthAdjust="spacingAndGlyphs" style="fill:#7cc8f8">F$  0,00</text>
</svg>
</body></html>
